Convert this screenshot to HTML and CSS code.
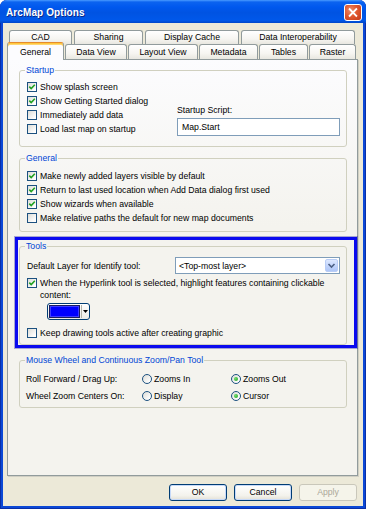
FILE: index.html
```html
<!DOCTYPE html>
<html lang="en">
<head>
    <meta charset="UTF-8">
    <title>ArcMap Options</title>
    <link rel="stylesheet" href="styles.css">
</head>
<body>
    <div class="window">
        <div class="titlebar">
            <span class="title">ArcMap Options</span>
            <span class="close-btn">
                <svg width="17" height="17" viewBox="0 0 17 17"><path d="M5 5l7 7M12 5l-7 7" stroke="#fff" stroke-width="2" stroke-linecap="square"/></svg>
            </span>
        </div>

        <div class="client">
            <!-- back row of tabs -->
            <div class="tabrow tabrow-back">
                <div class="tab w-cad">CAD</div>
                <div class="tab w-sharing">Sharing</div>
                <div class="tab w-cache">Display Cache</div>
                <div class="tab w-interop">Data Interoperability</div>
            </div>
            <!-- front row of tabs -->
            <div class="tabrow tabrow-front">
                <div class="tab tab-active w-general">General</div>
                <div class="tab w-dataview">Data View</div>
                <div class="tab w-layout">Layout View</div>
                <div class="tab w-meta">Metadata</div>
                <div class="tab w-tables">Tables</div>
                <div class="tab w-raster">Raster</div>
            </div>

            <div class="panel">
                <fieldset class="group group-startup">
                    <legend>Startup</legend>
                    <div class="startup">
                        <div class="checklist">
                            <div class="check-row"><span class="checkbox"><svg viewBox="0 0 8 8"><path d="M1.3 3.6l1.9 1.9 3.6-3.7" /></svg></span>Show splash screen</div>
                            <div class="check-row"><span class="checkbox"><svg viewBox="0 0 8 8"><path d="M1.3 3.6l1.9 1.9 3.6-3.7" /></svg></span>Show Getting Started dialog</div>
                            <div class="check-row"><span class="checkbox"></span>Immediately add data</div>
                            <div class="check-row"><span class="checkbox"></span>Load last map on startup</div>
                        </div>
                        <div class="script-box">
                            <div class="script-label">Startup Script:</div>
                            <div class="textbox">Map.Start</div>
                        </div>
                    </div>
                </fieldset>

                <fieldset class="group group-general">
                    <legend>General</legend>
                    <div class="group-body">
                        <div class="check-row"><span class="checkbox"><svg viewBox="0 0 8 8"><path d="M1.3 3.6l1.9 1.9 3.6-3.7" /></svg></span>Make newly added layers visible by default</div>
                        <div class="check-row"><span class="checkbox"><svg viewBox="0 0 8 8"><path d="M1.3 3.6l1.9 1.9 3.6-3.7" /></svg></span>Return to last used location when Add Data dialog first used</div>
                        <div class="check-row"><span class="checkbox"><svg viewBox="0 0 8 8"><path d="M1.3 3.6l1.9 1.9 3.6-3.7" /></svg></span>Show wizards when available</div>
                        <div class="check-row"><span class="checkbox"></span>Make relative paths the default for new map documents</div>
                    </div>
                </fieldset>

                <!-- highlighted section -->
                <div class="highlight">
                    <fieldset class="group group-tools">
                        <legend>Tools</legend>
                        <div class="group-body">
                            <div class="identify-row">
                                <span>Default Layer for Identify tool:</span>
                                <div class="combo">
                                    <span class="combo-text">&lt;Top-most layer&gt;</span>
                                    <span class="combo-btn"><svg width="9" height="9" viewBox="0 0 9 9"><path d="M1.5 3l3 3 3-3" fill="none" stroke="#4d6185" stroke-width="1.6"/></svg></span>
                                </div>
                            </div>
                            <div class="check-row check-wrap">
                                <span class="checkbox"><svg viewBox="0 0 8 8"><path d="M1.3 3.6l1.9 1.9 3.6-3.7" /></svg></span>
                                <span>When the Hyperlink tool is selected, highlight features containing clickable content:</span>
                            </div>
                            <div class="color-btn">
                                <span class="swatch"></span>
                                <span class="color-arrow"><svg width="5" height="3" viewBox="0 0 5 3"><path d="M0 0h5L2.5 3z" fill="#000"/></svg></span>
                            </div>
                            <div class="check-row check-keep"><span class="checkbox"></span>Keep drawing tools active after creating graphic</div>
                        </div>
                    </fieldset>
                </div>

                <fieldset class="group group-wheel">
                    <legend>Mouse Wheel and Continuous Zoom/Pan Tool</legend>
                    <div class="wheel-grid">
                        <span>Roll Forward / Drag Up:</span>
                        <span class="radio-item"><span class="radio"></span>Zooms In</span>
                        <span class="radio-item"><span class="radio radio-on"></span>Zooms Out</span>
                        <span>Wheel Zoom Centers On:</span>
                        <span class="radio-item"><span class="radio"></span>Display</span>
                        <span class="radio-item"><span class="radio radio-on"></span>Cursor</span>
                    </div>
                </fieldset>
            </div>

            <div class="buttons">
                <div class="btn btn-default">OK</div>
                <div class="btn btn-default">Cancel</div>
                <div class="btn btn-disabled">Apply</div>
            </div>
        </div>
    </div>
</body>
</html>
```

FILE: styles.css
```css
/* Base */
* {
    box-sizing: border-box;
}

html,
body {
    margin: 0;
    padding: 0;
    background-color: white;
}

body {
    width: 366px;
    height: 509px;
    overflow: hidden;
    font-family: "Liberation Sans", Arial, sans-serif;
    font-size: 8.7px;
    line-height: 12px;
    color: #000;
}

/* Window frame */
.window {
    width: 366px;
    height: 509px;
    display: flex;
    flex-direction: column;
    background-color: #0b48d6;
    border-radius: 7px 7px 0 0;
    overflow: hidden;
    box-shadow: inset 1px 0 0 #0a2fa6, inset -1px 0 0 #0a2fa6, inset 0 -1px 0 #0a2fa6;
}

.titlebar {
    height: 23px;
    flex-shrink: 0;
    display: flex;
    align-items: center;
    justify-content: space-between;
    padding: 2px 4px 0 6px;
    background: linear-gradient(#4a9bff 0, #0c63f0 2px, #0058ee 7px, #0053e2 55%, #0058ea 88%, #0046c8 100%);
}

.title {
    color: white;
    font-weight: bold;
    font-size: 10px;
    letter-spacing: 0.1px;
    text-shadow: 1px 1px 0 #0a2a8a;
}

.close-btn {
    width: 18px;
    height: 17px;
    display: flex;
    align-items: center;
    justify-content: center;
    border: 1px solid white;
    border-radius: 3px;
    background: radial-gradient(circle at 35% 35%, #f08c6a 0, #e0582f 45%, #c2391a 100%);
}

/* Client area */
.client {
    flex: 1;
    margin: 0 3px 3px;
    padding: 7px 5px 0 4px;
    display: flex;
    flex-direction: column;
    background-color: #ece9d8;
}

/* Tabs */
.tabrow {
    display: flex;
    flex-shrink: 0;
}

.tabrow-back {
    height: 14px;
    padding-left: 2px;
    gap: 2px;
}

.tabrow-front {
    height: 16px;
    gap: 1px;
    align-items: flex-end;
    margin-bottom: -1px;
    position: relative;
    z-index: 1;
}

.tab {
    border: 1px solid #919b9c;
    border-bottom: none;
    border-radius: 3px 3px 0 0;
    background: linear-gradient(#ffffff, #f6f5f1 60%, #e8e7e0);
    text-align: center;
    white-space: nowrap;
}

.tabrow-back .tab {
    height: 14px;
    line-height: 13px;
}

.tabrow-front .tab {
    height: 15px;
    line-height: 14px;
    margin-bottom: 1px;
}

.tabrow-front .tab-active {
    height: 18px;
    margin-bottom: 0;
    padding-top: 2px;
    border-top-color: #e68b2c;
    box-shadow: inset 0 1px 0 #ffc83c, inset 0 2px 0 #ffd773;
    background: #fcfcfe;
}

.w-cad { width: 63px; }
.w-sharing { width: 69px; }
.w-cache { width: 94px; }
.w-interop { width: 114px; }
.w-general { width: 57px; }
.w-dataview { width: 62px; }
.w-layout { width: 70px; }
.w-meta { width: 59px; }
.w-tables { width: 49px; }
.w-raster { width: 47px; }

/* Tab page */
.panel {
    flex: 1;
    padding: 4px 10px 0 11px;
    border: 1px solid #919b9c;
    background: linear-gradient(#fcfcfe, #f4f3ee 40%);
    box-shadow: 1px 1px 0 #d0cfc4;
}

/* Group boxes */
.group {
    margin: 0;
    padding: 0 5px 0 7px;
    min-width: 0;
    border: 1px solid #d0d0bf;
    border-radius: 3px;
}

.group legend {
    padding: 0 1px;
    margin-left: -2px;
    color: #0046d5;
    line-height: 12px;
}

.group-general {
    margin-top: 5px;
}

.group-body {
    padding: 5px 0 6px;
}

/* Startup */
.startup {
    display: flex;
    padding: 4px 0 10px;
}

.checklist {
    flex: 1;
}

.script-box {
    width: 163px;
    margin-right: 1px;
    display: flex;
    flex-direction: column;
    justify-content: flex-end;
}

.textbox {
    height: 18px;
    margin-top: 2px;
    padding-left: 4px;
    line-height: 16px;
    border: 1px solid #7f9db9;
    background-color: white;
}

/* Checkboxes */
.check-row {
    height: 14px;
    display: flex;
    align-items: center;
    white-space: nowrap;
}

.checkbox {
    width: 10px;
    height: 10px;
    flex-shrink: 0;
    margin-right: 3px;
    display: flex;
    align-items: center;
    justify-content: center;
    border: 1px solid #1c5180;
    background: linear-gradient(135deg, #dcdcd7, #ffffff 85%);
}

.checkbox svg {
    width: 8px;
    height: 8px;
}

.checkbox path {
    fill: none;
    stroke: #21a121;
    stroke-width: 1.6;
}

/* Tools */
.highlight {
    margin: 5px -10px 0 -4px;
    padding: 0 7px 0 1px;
    border: 3px solid #0a0aee;
    box-shadow: 0 0 0 1px rgba(20, 20, 160, 0.35);
}

.identify-row {
    height: 17px;
    display: flex;
    align-items: center;
    justify-content: space-between;
}

.combo {
    width: 165px;
    height: 17px;
    margin-right: 1px;
    display: flex;
    align-items: center;
    justify-content: space-between;
    padding: 0 1px 0 3px;
    border: 1px solid #7f9db9;
    background-color: white;
}

.combo-btn {
    width: 13px;
    height: 13px;
    display: flex;
    align-items: center;
    justify-content: center;
    border: 1px solid #b9cdf6;
    border-radius: 2px;
    background: linear-gradient(#dde8ff, #c0d3fb 60%, #aec6f7);
}

.check-wrap {
    height: auto;
    margin-top: 3px;
    align-items: flex-start;
    white-space: normal;
}

.check-wrap .checkbox {
    margin-top: 1px;
}

.color-btn {
    width: 43px;
    height: 17px;
    margin: 2px 0 0 20px;
    display: flex;
    align-items: center;
    padding: 1px;
    border: 1px solid #003c74;
    border-radius: 3px;
    background: linear-gradient(#ffffff, #ecebe6);
}

.swatch {
    width: 31px;
    height: 13px;
    border: 1px solid #1c1c60;
    background-color: #0000ff;
    box-shadow: inset 0 0 0 1px #3f3fff;
}

.color-arrow {
    flex: 1;
    height: 13px;
    display: flex;
    align-items: center;
    justify-content: center;
    border-left: 1px solid #b5b3a8;
    margin-left: 1px;
}

.check-keep {
    margin-top: 6px;
}

.group-tools .group-body {
    padding: 5px 0 4px;
}

/* Mouse wheel */
.group-wheel {
    margin-top: 6px;
}

.wheel-grid {
    display: grid;
    grid-template-columns: 116px 89px 1fr;
    grid-auto-rows: 17px;
    align-items: center;
    padding: 4px 0 3px;
    margin-left: -1px;
}

.radio-item {
    display: flex;
    align-items: center;
}

.radio {
    width: 10px;
    height: 10px;
    margin-right: 2px;
    display: flex;
    align-items: center;
    justify-content: center;
    border: 1px solid #1c5180;
    border-radius: 50%;
    background: linear-gradient(135deg, #dcdcd7, #ffffff 85%);
}

.radio-on::after {
    content: "";
    width: 4px;
    height: 4px;
    border-radius: 50%;
    background: radial-gradient(circle at 35% 35%, #6ddc6d, #21a121);
}

/* Dialog buttons */
.buttons {
    height: 17px;
    margin: 8px 1px 5px 0;
    display: flex;
    justify-content: flex-end;
    gap: 7px;
    flex-shrink: 0;
}

.btn {
    width: 58px;
    height: 17px;
    line-height: 15px;
    text-align: center;
    border: 1px solid #003c74;
    border-radius: 3px;
    background: linear-gradient(#ffffff, #f3f2ec 70%, #e3e1d6);
}

.btn-default {
    box-shadow: inset 0 0 0 1px #c6d9f8;
}

.btn-disabled {
    color: #aca899;
    border-color: #c9c7ba;
    background: #f5f4ea;
}
```
